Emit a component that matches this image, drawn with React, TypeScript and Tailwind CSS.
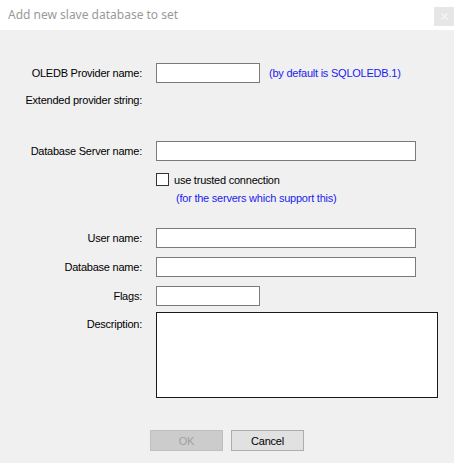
export default function App() {
  const label = "w-[142px] shrink-0 text-right whitespace-nowrap";
  const input = "h-[20px] border border-[#7a7a7a] bg-white";
  return (
    <div className="flex h-[464px] w-[454px] flex-col bg-[#f0f0f0] font-['Liberation_Sans',Arial,sans-serif] text-[11px] leading-[14px] tracking-[-0.23px] text-black">
      <div className="flex h-[30px] shrink-0 items-start justify-between bg-white tracking-normal">
        <span className="mt-[6px] ml-[8px] font-['Noto_Sans',sans-serif] text-[12px] leading-[17px] text-[#9a9a9a]">
          Add new slave database to set
        </span>
        <div className="mt-[7px] flex h-[19px] w-[20px] items-center justify-center bg-[#e6e6e6]">
          <svg width="7" height="7" viewBox="0 0 7 7">
            <path d="M0.5 0.5 L6.5 6.5 M6.5 0.5 L0.5 6.5" stroke="#f7f7f7" strokeWidth="1.2" />
          </svg>
        </div>
      </div>

      <div className="flex flex-1 flex-col">
        <div className="mt-[33px] flex h-[20px] items-center gap-[14px]">
          <span className={label}>OLEDB Provider name:</span>
          <div className={`${input} w-[104px]`} />
          <span className="ml-[-5px] text-[#1c1cf0]">(by default is SQLOLEDB.1)</span>
        </div>

        <div className="mt-[7px] flex h-[20px] items-center">
          <span className={label}>Extended provider string:</span>
        </div>

        <div className="mt-[31px] flex h-[20px] items-center gap-[14px]">
          <span className={label}>Database Server name:</span>
          <div className={`${input} w-[260px]`} />
        </div>

        <div className="mt-[12px] flex h-[13px] items-center pl-[156px]">
          <div className="h-[13px] w-[13px] border border-[#333333] bg-white" />
          <span className="ml-[5px]">use trusted connection</span>
        </div>

        <div className="mt-[5px] flex h-[14px] items-center pl-[176px] text-[#1c1cf0]">
          (for the servers which support this)
        </div>

        <div className="mt-[23px] flex h-[20px] items-center gap-[14px]">
          <span className={label}>User name:</span>
          <div className={`${input} w-[260px]`} />
        </div>

        <div className="mt-[9px] flex h-[20px] items-center gap-[14px]">
          <span className={label}>Database name:</span>
          <div className={`${input} w-[260px]`} />
        </div>

        <div className="mt-[9px] flex h-[20px] items-center gap-[14px]">
          <span className={label}>Flags:</span>
          <div className={`${input} w-[104px]`} />
        </div>

        <div className="mt-[6px] flex items-start gap-[14px]">
          <span className={`${label} pt-[5px]`}>Description:</span>
          <div className="h-[86px] w-[282px] border border-[#1a1a1a] bg-white" />
        </div>

        <div className="mt-[32px] flex gap-[8px] pl-[150px]">
          <button
            type="button"
            disabled
            className="h-[21px] w-[73px] border border-[#bfbfbf] bg-[#cccccc] text-[#a0a0a0]"
          >
            OK
          </button>
          <button
            type="button"
            className="h-[21px] w-[73px] border border-[#adadad] bg-[#e1e1e1] text-black"
          >
            Cancel
          </button>
        </div>
      </div>
      <div className="h-px shrink-0 bg-white" />
    </div>
  );
}
